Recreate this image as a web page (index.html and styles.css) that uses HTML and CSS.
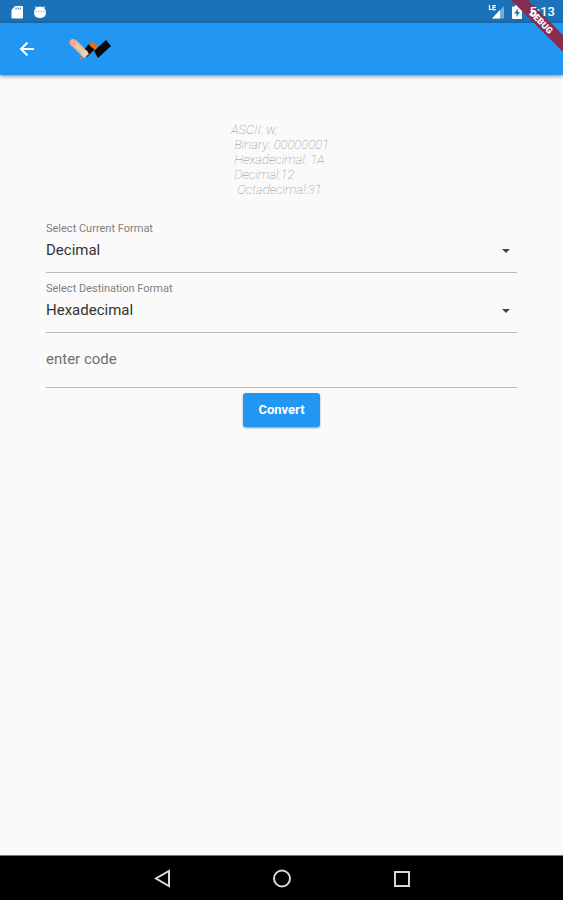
FILE: index.html
```html
<!DOCTYPE html>
<html lang="en">
<head>
<meta charset="utf-8">
<meta name="viewport" content="width=device-width, initial-scale=1">
<title>Converter</title>
<link rel="stylesheet" href="styles.css">
</head>
<body>
<div class="status-bar">
  <div class="status-group">
    <svg class="status-icon" viewBox="0 0 14 14" aria-hidden="true"><path fill="#fff" d="M5 1h7q1 0 1 1v10.500q0 1-1 1H2.500q-1 0-1-1V5z"/><path stroke="#1b72b8" d="M6 2.500v2M8.200 2.500v2M10.400 2.500v2"/></svg>
    <svg class="status-icon" viewBox="0 0 14 14" aria-hidden="true"><path fill="#fff" d="M2 1l2 1.200Q7 .8 10 2.200L12 1l-.8 2.200Q12.500 4.500 12.800 6v3.500Q11.500 13 7 13T1.200 9.500V6Q1.500 4.500 2.800 3.200z"/><path stroke="#c4dcee" d="M1.500 6.500h11"/></svg>
  </div>
  <div class="status-group status-right">
    <svg class="signal-icon" viewBox="0 0 17 14" aria-hidden="true"><path fill="#6faedd" d="M16 1v12.500H4z"/><path fill="#fff" d="M12 5v8.500H4z"/><path fill="none" stroke="#fff" stroke-width="1.200" d="M1.500 0v4.500H4M8 .6H5v4h3M5 2.500h2.500"/></svg>
    <svg class="battery-icon" viewBox="0 0 10 14" aria-hidden="true"><path fill="#fff" d="M3 0h4v1.500h2q1 0 1 1V13q0 1-1 1H1q-1 0-1-1V2.500q0-1 1-1h2z"/><path fill="#1b72b8" d="M5.800 3.500L2.200 8.500h2.300v3.500l3.400-5H5.800z"/></svg>
    <span class="clock">5:13</span>
  </div>
</div>
<header class="app-bar">
  <button class="back" type="button" aria-label="Back">
    <svg viewBox="0 0 16 16" aria-hidden="true"><path fill="none" stroke="#fff" stroke-width="2" d="M15 8H2M8.500 1.500L2 8l6.500 6.500"/></svg>
  </button>
  <svg class="logo" viewBox="0 0 44 24" aria-hidden="true">
    <path fill="#080808" d="M14 15l7-8 6 5-8 8z"/>
    <path fill="#e66f17" d="M21 8l3-4 6 5-2 5z"/>
    <path fill="#080808" d="M26 14L38 3l5 6-13 12z"/>
    <path fill="#e9b9a4" d="M3 8l5-5 12 12-5 5z"/>
    <path stroke="#e3d991" stroke-width="2" d="M8 8l8 8"/>
    <circle cx="5" cy="5.500" r="3.500" fill="#f4a98d"/>
    <path fill="#f6cfb5" d="M13 18l5-5 3 4-5 4z"/>
    <path fill="#a77f8b" d="M11 20l5 0-4 4z"/>
  </svg>
</header>
<svg class="debug-ribbon" viewBox="0 0 54 54" aria-hidden="true">
  <path fill="#862c4d" d="M2 0h17l35 35v17z"/>
  <text class="debug-text" transform="translate(32 22) rotate(45)" text-anchor="middle" y="3">DEBUG</text>
</svg>
<main class="content">
  <p class="examples">ASCII: w,
 Binary: 00000001 
 Hexadecimal: 1A
 Decimal:12
  Octadecimal:31</p>
  <form class="converter">
    <div class="field">
      <label for="source">Select Current Format</label>
      <select id="source"><option>ASCII</option><option>Binary</option><option selected>Decimal</option><option>Hexadecimal</option><option>Octadecimal</option></select>
      <svg class="caret" viewBox="0 0 10 5" aria-hidden="true"><path fill="#444" d="M1 0h8L5 4z"/></svg>
    </div>
    <div class="field">
      <label for="target">Select Destination Format</label>
      <select id="target"><option>ASCII</option><option>Binary</option><option>Decimal</option><option selected>Hexadecimal</option><option>Octadecimal</option></select>
      <svg class="caret" viewBox="0 0 10 5" aria-hidden="true"><path fill="#444" d="M1 0h8L5 4z"/></svg>
    </div>
    <input class="code" type="text" placeholder="enter code" aria-label="enter code">
    <button class="convert" type="button">Convert</button>
  </form>
</main>
<nav class="nav-bar">
  <button type="button" aria-label="Back"><svg viewBox="0 0 20 20" aria-hidden="true"><path d="M17 3v15L4 10.500z"/></svg></button>
  <button type="button" aria-label="Home"><svg viewBox="0 0 20 20" aria-hidden="true"><circle cx="10" cy="10.500" r="8"/></svg></button>
  <button type="button" aria-label="Recent apps"><svg viewBox="0 0 20 20" aria-hidden="true"><path d="M3 4h14v14H3z"/></svg></button>
</nav>
</body>
</html>
```
FILE: styles.css
```css
* {
  box-sizing: border-box;
}

body {
  margin: 0;
  min-height: 100vh;
  display: flex;
  flex-direction: column;
  position: relative;
  overflow-x: hidden;
  background: #fafafa;
  color: #333;
  font-family: Roboto, "Liberation Sans", sans-serif;
}

button {
  border: 0;
  padding: 0;
  background: none;
  font-family: inherit;
}

svg {
  display: block;
}

.status-bar {
  height: 23px;
  padding: 0 8px 0 10px;
  display: flex;
  align-items: center;
  justify-content: space-between;
  background: #1b72b8;
}

.status-group {
  display: flex;
  align-items: center;
  gap: 9px;
}

.status-right {
  gap: 7px;
}

.status-icon {
  width: 14px;
  height: 14px;
}

.signal-icon {
  width: 17px;
  height: 14px;
}

.battery-icon {
  width: 10px;
  height: 14px;
}

.clock {
  position: relative;
  z-index: 2;
  color: #fff;
  font-size: 13px;
  font-weight: 500;
  line-height: 23px;
}

.app-bar {
  height: 52px;
  padding: 0 19px;
  display: flex;
  align-items: center;
  gap: 33px;
  background: #2196f3;
  box-shadow: 0 1px 4px rgba(0, 0, 0, 0.5);
}

.back svg {
  width: 16px;
  height: 16px;
}

.logo {
  width: 44px;
  height: 24px;
}

.debug-ribbon {
  position: absolute;
  top: 0;
  right: 0;
  width: 54px;
  height: 54px;
}

.debug-text {
  fill: #fff;
  font-size: 9px;
  font-weight: 900;
}

.content {
  flex: 1;
  padding: 47px 46px 0;
  display: flex;
  flex-direction: column;
}

.examples {
  margin: 0 auto;
  color: #888;
  font-size: 13px;
  font-style: italic;
  font-weight: 100;
  line-height: 15px;
  white-space: pre;
}

.converter {
  margin-top: 24px;
  display: flex;
  flex-direction: column;
}

.field {
  height: 60px;
  position: relative;
  display: flex;
  flex-direction: column;
  border-bottom: 1px solid #bbb;
  padding-top: 8px;
}

.field:first-child {
  height: 52px;
  padding-top: 0;
}

.field label {
  color: #808080;
  font-size: 11px;
  line-height: 16px;
}

.field select {
  width: 100%;
  height: 26px;
  border: 0;
  padding: 0;
  appearance: none;
  background: transparent;
  color: #333;
  font: 15px/26px Roboto, "Liberation Sans", sans-serif;
}

.caret {
  position: absolute;
  right: 6px;
  bottom: 18px;
  width: 10px;
  height: 5px;
  pointer-events: none;
}

.code {
  width: 100%;
  height: 55px;
  border: 0;
  border-bottom: 1px solid #bbb;
  border-radius: 0;
  padding: 0 0 2px;
  background: transparent;
  color: #333;
  font: 15px/20px Roboto, "Liberation Sans", sans-serif;
}

.code::placeholder {
  color: #707070;
  opacity: 1;
}

.convert {
  align-self: center;
  margin-top: 5px;
  padding: 0 15px;
  border-radius: 3px;
  background: #2196f3;
  box-shadow: 0 1px 2px rgba(0, 0, 0, 0.4);
  color: #fff;
  font-size: 13px;
  font-weight: 700;
  line-height: 34px;
}

.nav-bar {
  height: 45px;
  display: flex;
  align-items: center;
  justify-content: center;
  gap: 100px;
  border-top: 1px solid #777;
  background: #000;
}

.nav-bar svg {
  width: 20px;
  height: 20px;
  fill: none;
  stroke: #d8d8d8;
  stroke-width: 2;
}
```
